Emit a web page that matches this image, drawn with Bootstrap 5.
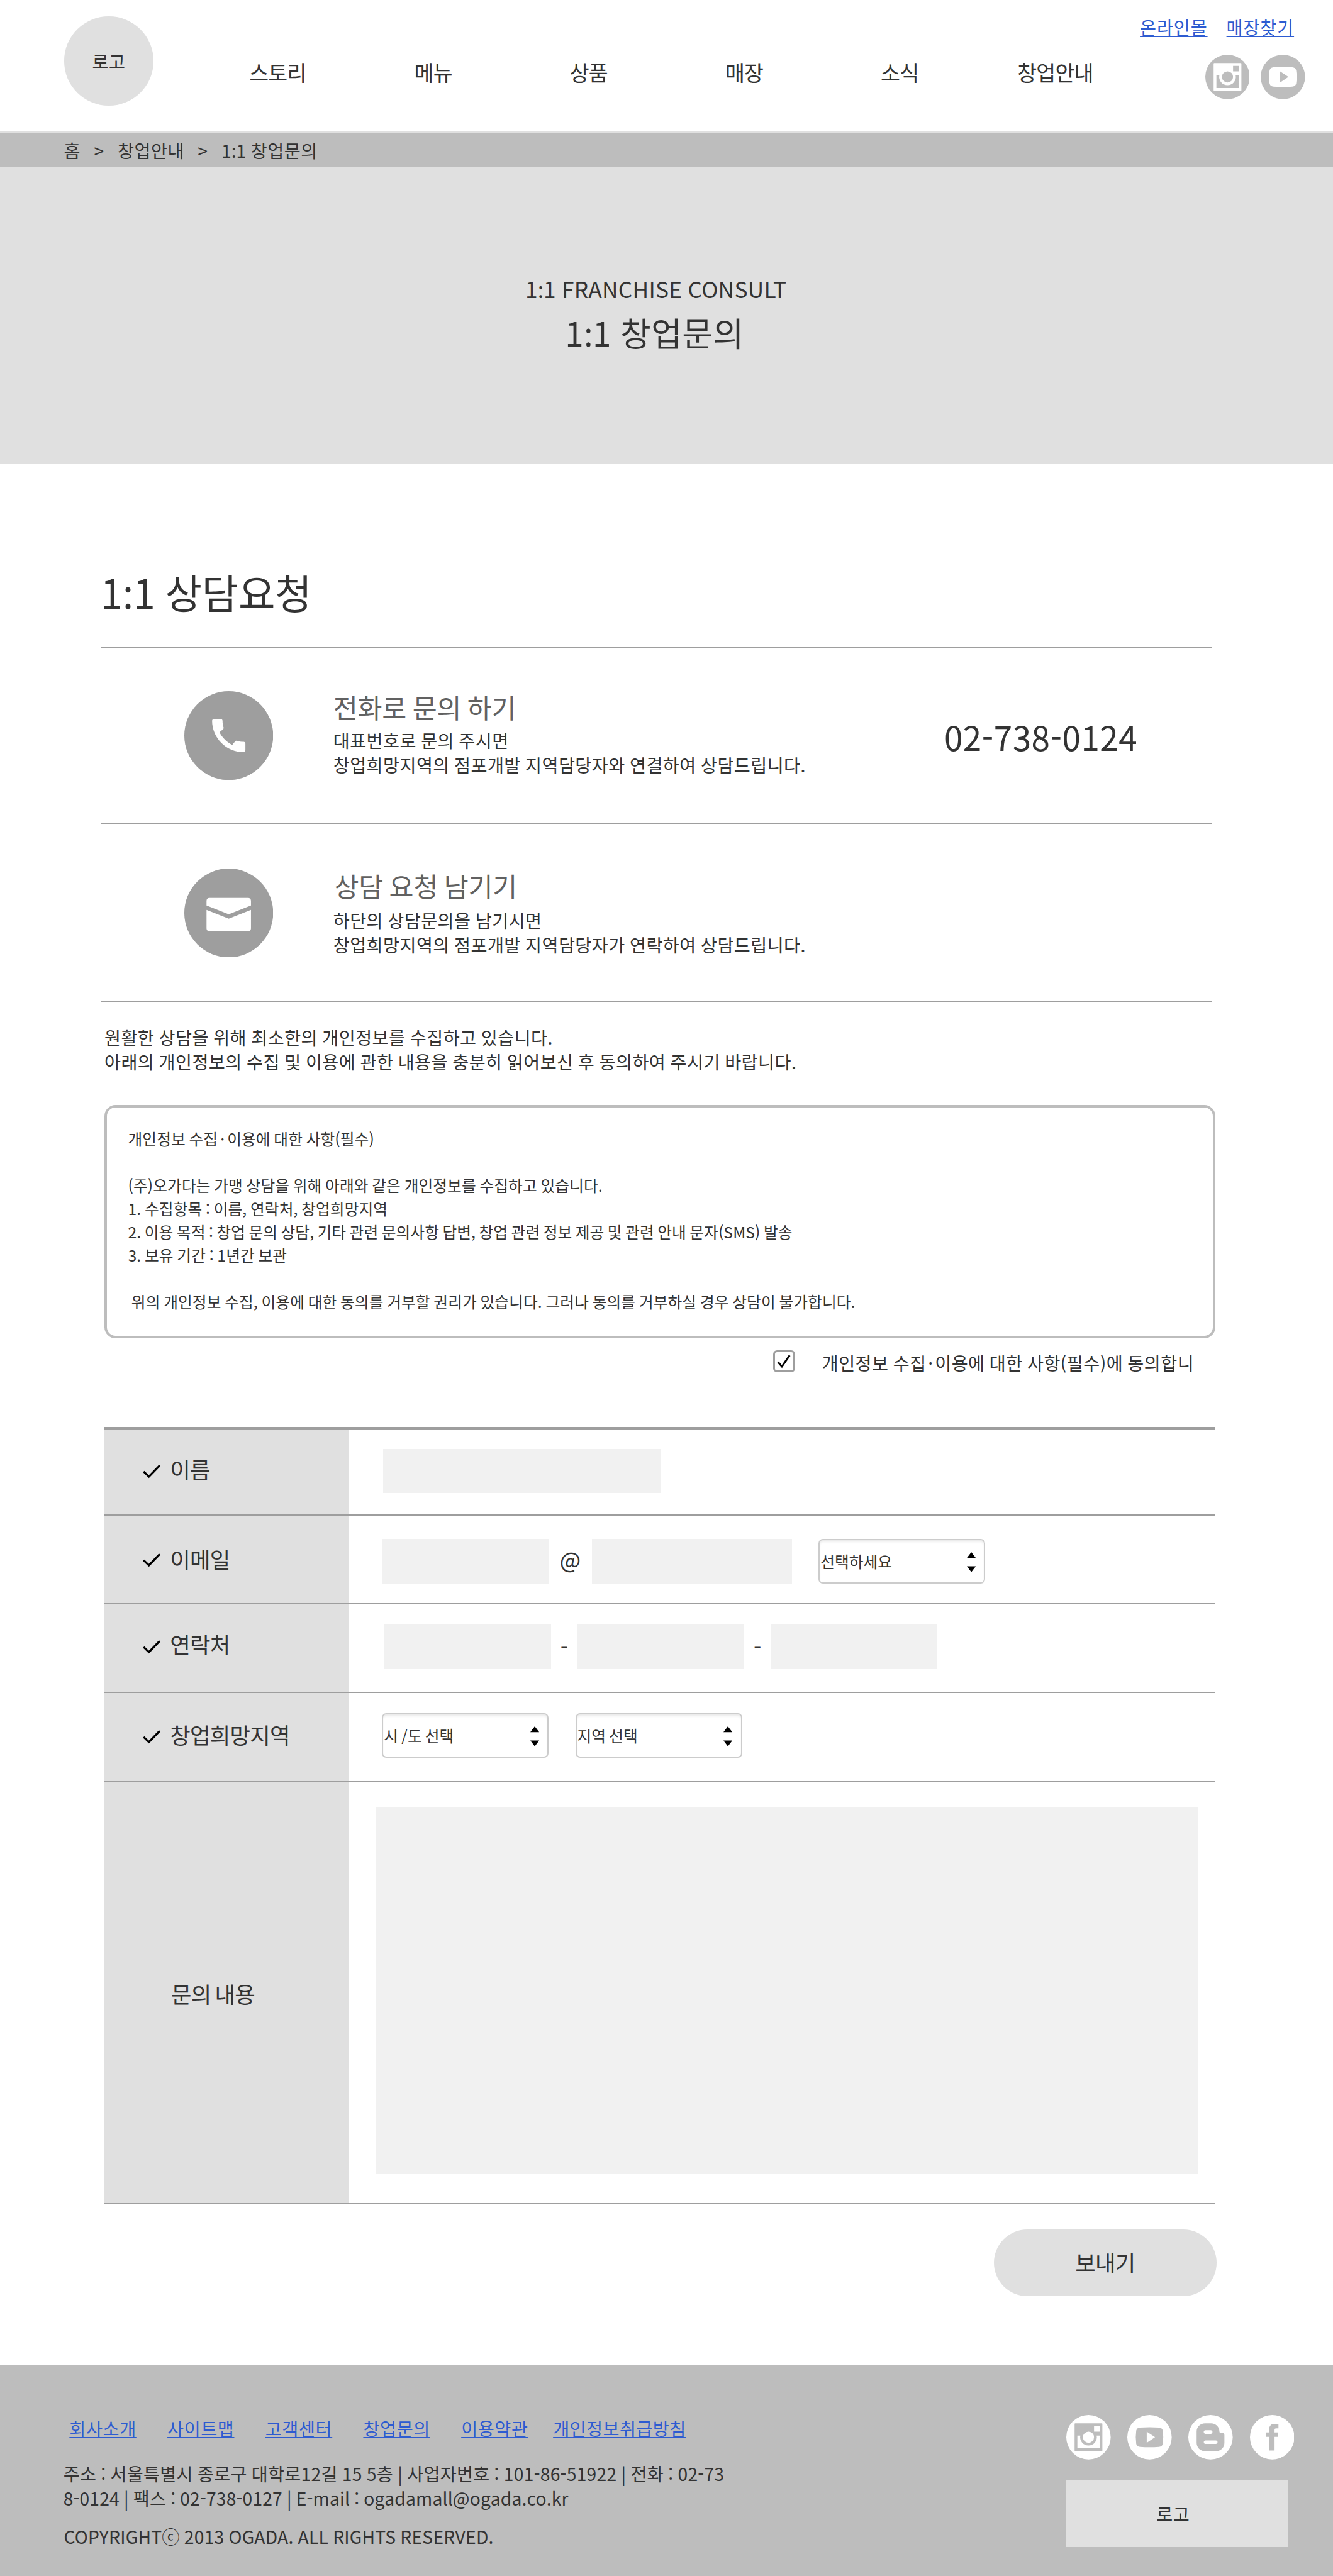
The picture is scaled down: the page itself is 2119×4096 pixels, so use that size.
<!DOCTYPE html>
<html lang="ko">
<head>
<meta charset="utf-8">
<meta name="viewport" content="width=device-width, initial-scale=1">
<title>1:1 창업문의</title>
<link href="https://cdn.jsdelivr.net/npm/bootstrap@5.3.0/dist/css/bootstrap.min.css" rel="stylesheet">
<style>
/* 1rem = 10 design pixels on the 2400-wide layout */
html{font-size:8.829167px}
body{font-family:"Noto Sans CJK KR",sans-serif;font-size:3.2rem;line-height:4.4rem;color:#333;background:#fff;letter-spacing:.05rem;word-spacing:-.12rem;overflow-x:hidden}
.bg-soft{background:#e0e0e0}
.bg-mid{background:#bdbdbd}
.cln{display:inline-block;width:.26em;text-align:center;font-family:"Noto Sans",sans-serif;line-height:1;letter-spacing:0}
.tlink{color:#2d5bd1;text-decoration:underline;text-decoration-thickness:2px;text-underline-offset:.25rem;text-decoration-skip-ink:none;white-space:nowrap}
.tlink:hover{color:#1d44a8}
.site-head{height:24rem;border-bottom:4px solid #e0e0e0}
.logo-dot{width:16rem;height:16rem;margin:3rem 0 0 11.6rem}
.main-menu{margin:10.2rem 0 0 8.4rem}
.main-menu .nav-link{width:28rem;padding:0;font-size:3.8rem;line-height:5.6rem;letter-spacing:-.08rem;color:#333;text-align:center}
.util{width:36rem}
.util-links{gap:3.4rem;padding:2.75rem 7rem 0 0;letter-spacing:.1rem}
.util-sns{gap:2rem;padding:2.65rem 5rem 0 0}
.sns{width:8rem;height:8rem;display:block}
.crumb-bar{height:6rem;padding:.2rem 0 0 11.5rem}
.crumb-bar .sep{width:6.7rem;text-align:center}
.hero{height:53.6rem;padding:19rem 3.8rem 0 0}
.hero-en{font-size:4rem;line-height:6rem;letter-spacing:.03rem}
.hero-ko{font-size:6rem;line-height:9rem;margin:.4rem .5rem 0 0;font-weight:400}
.sec-title{font-size:7.2rem;line-height:10.8rem;font-weight:400;letter-spacing:-.02rem;word-spacing:-.2rem;margin:17.6rem 0 4.4rem 18.1rem}
.contact-list{width:200rem;margin-left:18.2rem;border-top:2px solid #9e9e9e}
.contact-item{height:31.8rem;border-bottom:2px solid #9e9e9e;padding:7.8rem 13.4rem 0 15rem}
.contact-item + .contact-item{height:32rem;padding-top:8rem}
.ico-dot{width:16rem;height:16rem;flex:none}
.contact-body{margin-left:10.8rem}
.contact-body h2{font-size:4.8rem;line-height:6rem;font-weight:400;color:#616161;letter-spacing:-.02rem;word-spacing:-.25rem;margin:-.1rem 0 .8rem}
.contact-item + .contact-item h2{margin:.1rem 0 1rem .2rem}
.tel{font-size:6rem;line-height:8rem;letter-spacing:.06rem;margin-top:4.2rem}
.intro{margin:4.2rem 0 0 18.8rem}
.terms{width:200rem;height:42rem;margin:5.57rem 0 0 18.8rem;border:4px solid #bdbdbd;border-radius:2rem;padding:3.5rem 3.8rem;font-size:2.8rem;line-height:4.2rem;letter-spacing:.01rem;word-spacing:-.15rem}
.terms p{margin:0}
.terms .gap-top{margin-top:4.2rem}
.terms .indent{padding-left:.6rem}
.dotsep{padding:0 .45rem}
.agree{margin:2rem 0 0 139.2rem}
.agree .dotsep{padding:0 .3rem}
.tick-box{width:4rem;height:4rem;border:3px solid #9e9e9e;border-radius:.7rem}
.tick-box svg{width:2.6rem;height:2.6rem}
.agree-text{margin-left:4.8rem;padding-top:.3rem;margin-bottom:-.3rem}
.ask{width:200rem;margin:9.57rem 0 0 18.8rem;border-top:5px solid #9e9e9e}
.ask-row{height:16rem;border-bottom:2px solid #9e9e9e}
.ask-label{width:44rem;padding-left:6.9rem;font-size:4rem;line-height:6rem;letter-spacing:-.08rem}
.ask-label svg{width:3.2rem;height:2.6rem;margin-right:1.7rem}
.ask .form-control{height:8rem;width:30rem;background:#f1f1f1;border:0;border-radius:0;padding:0 1rem;font-size:3.2rem;flex:none}
.ask .joint{font-size:4rem;text-align:center;flex:none}
.pick{width:30rem;height:8rem;flex:none;border:2px solid #ccc;border-radius:.8rem;background:#fff;box-shadow:inset 0 .4rem .5rem -.2rem #e4e4e4;padding:0 1.5rem 0 .1rem;font-size:2.8rem;letter-spacing:0;word-spacing:-.2rem;color:#333}
.pick svg{width:1.6rem;height:3.6rem;margin-top:.4rem}
/* per-row offsets inside the form */
.row-name{height:15.43rem}
.row-name .ask-label{padding-bottom:1rem}
.row-name svg{margin-top:.6rem}
.row-name .ask-field{padding:0 0 .4rem 6.2rem}
.row-mail .ask-label svg{margin-top:.2rem}
.row-mail .ask-field{padding:.6rem 0 0 6rem}
.row-mail .joint{width:7.8rem;padding-bottom:.7rem}
.row-mail .pick{margin-left:4.8rem}
.row-tel .ask-label{padding-bottom:1.4rem}
.row-tel svg{margin-top:.9rem}
.row-tel .ask-field{padding:0 0 .6rem 6.4rem}
.row-tel .joint{width:4.8rem}
.row-area .ask-label{padding-bottom:.8rem}
.row-area .ask-label svg{margin-top:.6rem}
.row-area .ask-field{padding:0 0 .6rem 6rem}
.row-area .pick + .pick{margin-left:4.8rem}
.row-memo{height:76rem}
.row-memo .ask-field{padding:4.6rem 0 0 4.8rem}
.row-memo .ask-label{padding:.4rem 0 0 12rem;word-spacing:-.35rem}
.ask .row-memo .form-control{width:148rem;height:66rem;resize:none}
.send{width:40rem;height:12rem;margin:4.6rem 0 0 179rem;padding:0 0 .2rem;font-size:4rem;letter-spacing:-.08rem;color:#333;border-radius:6rem;border:0}
.site-foot{height:38rem;margin-top:12.4rem;padding:9rem 7rem 0 11.4rem}
.foot-links{padding:.15rem 0 0 1.1rem;gap:5.58rem;letter-spacing:.07rem}
.foot-links .last{margin-left:-1.1rem;letter-spacing:.05rem}
.foot-addr{margin-top:3.8rem;letter-spacing:.02rem}
.foot-addr .wide-line{letter-spacing:.03rem}
.foot-copy{margin:2.5rem 0 0 .1rem;letter-spacing:.025rem}
.foot-sns{width:41rem}
.foot-logo{width:40rem;height:12rem;margin-top:3.8rem;padding-right:1.6rem}
</style>
</head>
<body>
<svg class="d-none" xmlns="http://www.w3.org/2000/svg">
  <symbol id="insta" viewBox="0 0 80 80"><path fill-rule="evenodd" d="M16 15h48a1 1 0 0 1 1 1v48a1 1 0 0 1-1 1H16a1 1 0 0 1-1-1V16a1 1 0 0 1 1-1zM50 20v10h10V20zM20 37v23h40V37h-5.300a15 15 0 1 1-29.400 0zM40 30a10 10 0 1 0 0 20a10 10 0 1 0 0-20z"/></symbol>
  <symbol id="tube" viewBox="0 0 80 80"><path fill-rule="evenodd" d="M23 22.600Q40 21.400 57 22.600Q62.500 23 63.900 28Q65.700 40 63.900 52Q62.500 57 57 57.400Q40 58.600 23 57.400Q17.500 57 16.100 52Q14.300 40 16.100 28Q17.500 23 23 22.600zM35 30v20l15-10z"/></symbol>
  <symbol id="blog" viewBox="0 0 80 80"><path fill-rule="evenodd" d="M30 15H41C49.500 15 56 21.500 56 29.500Q56 32.500 59 32.500H61.500Q65 32.700 65 36V50C65 58.500 58.500 65 50 65H30C21.500 65 15 58.500 15 50V30C15 21.500 21.500 15 30 15zM31 27.500a3.200 3.200 0 0 0 0 6.400h9.300a3.200 3.200 0 0 0 0-6.400zM31 46a3.100 3.100 0 0 0 0 6.200h18.500a3.100 3.100 0 0 0 0-6.200z"/></symbol>
  <symbol id="face" viewBox="0 0 80 80"><path d="M34.600 64V39.500H29V31.500H34.600V26.500C34.600 19.500 38 15.800 44.500 15.800H51.300V24H47Q44.300 24 44.300 26.700V31.500H51L50.300 39.500H44.300V64z"/></symbol>
  <symbol id="tick" viewBox="0 0 32 26"><path d="M1.500 13.500L11 22.500L30.500 2.500" fill="none" stroke="#000" stroke-width="3.700"/></symbol>
  <symbol id="updown" viewBox="0 0 16 36"><path d="M8 0L16 10.500H0zM8 36L16 25.500H0z"/></symbol>
</svg>

<header class="site-head d-flex align-items-start">
  <a href="#" class="logo-dot bg-soft rounded-circle d-flex align-items-center justify-content-center text-reset text-decoration-none">로고</a>
  <ul class="main-menu nav flex-nowrap">
    <li class="nav-item"><a class="nav-link" href="#">스토리</a></li>
    <li class="nav-item"><a class="nav-link" href="#">메뉴</a></li>
    <li class="nav-item"><a class="nav-link" href="#">상품</a></li>
    <li class="nav-item"><a class="nav-link" href="#">매장</a></li>
    <li class="nav-item"><a class="nav-link" href="#">소식</a></li>
    <li class="nav-item"><a class="nav-link" href="#">창업안내</a></li>
  </ul>
  <div class="util">
    <div class="util-links d-flex justify-content-end"><a href="#" class="tlink">온라인몰</a><a href="#" class="tlink">매장찾기</a></div>
    <div class="util-sns d-flex justify-content-end">
      <svg class="sns" viewBox="0 0 80 80"><circle cx="40" cy="40" r="40" fill="#bdbdbd"/><use href="#insta" fill="#fff"/></svg>
      <svg class="sns" viewBox="0 0 80 80"><circle cx="40" cy="40" r="40" fill="#bdbdbd"/><use href="#tube" fill="#fff"/></svg>
    </div>
  </div>
</header>

<nav class="crumb-bar bg-mid d-flex align-items-center">
  <span>홈</span><span class="sep">&gt;</span><span>창업안내</span><span class="sep">&gt;</span><span>1<span class="cln">:</span>1 창업문의</span>
</nav>

<section class="hero bg-soft text-center">
  <div class="hero-en">1<span class="cln">:</span>1 FRANCHISE CONSULT</div>
  <h1 class="hero-ko">1<span class="cln">:</span>1 창업문의</h1>
</section>

<main>
  <h2 class="sec-title">1<span class="cln">:</span>1 상담요청</h2>
  <div class="contact-list">
    <div class="contact-item d-flex align-items-start">
      <svg class="ico-dot" viewBox="0 0 160 160"><circle cx="80" cy="80" r="80" fill="#9e9e9e"/><path transform="translate(40 40) scale(3.3333)" fill="#fff" d="M20.010 15.380c-1.230 0-2.420-.2-3.530-.56a.977.977 0 0 0-1.010.24l-1.570 1.970c-2.830-1.350-5.480-3.900-6.890-6.830l1.950-1.660c.27-.28.35-.67.24-1.020-.37-1.110-.56-2.300-.56-3.530 0-.54-.45-.99-.99-.99H4.190C3.650 3 3 3.240 3 3.990 3 13.280 10.730 21 20.010 21c.71 0 .99-.63.99-1.180v-3.450c0-.54-.45-.99-.99-.99z"/></svg>
      <div class="contact-body">
        <h2>전화로 문의 하기</h2>
        <div>대표번호로 문의 주시면<br>창업희망지역의 점포개발 지역담당자와 연결하여 상담드립니다.</div>
      </div>
      <div class="tel ms-auto">02-738-0124</div>
    </div>
    <div class="contact-item d-flex align-items-start">
      <svg class="ico-dot" viewBox="0 0 160 160"><circle cx="80" cy="80" r="80" fill="#9e9e9e"/><path fill="#fff" d="M45 53H115a5 5 0 0 1 5 5V66.500L80 82.500L40 66.500V58a5 5 0 0 1 5-5zM40 74.500L80 90.300L120 74.500V108a5 5 0 0 1-5 5H45a5 5 0 0 1-5-5z"/></svg>
      <div class="contact-body">
        <h2>상담 요청 남기기</h2>
        <div>하단의 상담문의을 남기시면<br>창업희망지역의 점포개발 지역담당자가 연락하여 상담드립니다.</div>
      </div>
    </div>
  </div>

  <div class="intro">원활한 상담을 위해 최소한의 개인정보를 수집하고 있습니다.<br>아래의 개인정보의 수집 및 이용에 관한 내용을 충분히 읽어보신 후 동의하여 주시기 바랍니다.</div>

  <div class="terms">
    <p>개인정보 수집<span class="dotsep">·</span>이용에 대한 사항(필수)</p>
    <p class="gap-top">(주)오가다는 가맹 상담을 위해 아래와 같은 개인정보를 수집하고 있습니다.</p>
    <p>1. 수집항목 : 이름, 연락처, 창업희망지역</p>
    <p style="word-spacing:-.18rem">2. 이용 목적 : 창업 문의 상담, 기타 관련 문의사항 답변, 창업 관련 정보 제공 및 관련 안내 문자(SMS) 발송</p>
    <p>3. 보유 기간 : 1년간 보관</p>
    <p class="gap-top indent">위의 개인정보 수집, 이용에 대한 동의를 거부할 권리가 있습니다. 그러나 동의를 거부하실 경우 상담이 불가합니다.</p>
  </div>

  <div class="agree d-flex align-items-center">
    <span class="tick-box d-flex align-items-center justify-content-center"><svg viewBox="0 0 26 26"><path d="M2 14.500L9 22.500L23 2.500" fill="none" stroke="#000" stroke-width="3.400"/></svg></span>
    <span class="agree-text">개인정보 수집<span class="dotsep">·</span>이용에 대한 사항(필수)에 동의합니</span>
  </div>

  <form class="ask">
    <div class="ask-row row-name d-flex">
      <div class="ask-label bg-soft d-flex align-items-center"><svg><use href="#tick"/></svg>이름</div>
      <div class="ask-field d-flex align-items-center"><input class="form-control" style="width:50rem" aria-label="이름"></div>
    </div>
    <div class="ask-row row-mail d-flex">
      <div class="ask-label bg-soft d-flex align-items-center"><svg><use href="#tick"/></svg>이메일</div>
      <div class="ask-field d-flex align-items-center">
        <input class="form-control" aria-label="이메일 아이디">
        <span class="joint">@</span>
        <input class="form-control" style="width:36rem" aria-label="이메일 도메인">
        <button type="button" class="pick d-flex align-items-center justify-content-between">선택하세요<svg><use href="#updown"/></svg></button>
      </div>
    </div>
    <div class="ask-row row-tel d-flex">
      <div class="ask-label bg-soft d-flex align-items-center"><svg><use href="#tick"/></svg>연락처</div>
      <div class="ask-field d-flex align-items-center">
        <input class="form-control" aria-label="연락처 1">
        <span class="joint">-</span>
        <input class="form-control" aria-label="연락처 2">
        <span class="joint">-</span>
        <input class="form-control" aria-label="연락처 3">
      </div>
    </div>
    <div class="ask-row row-area d-flex">
      <div class="ask-label bg-soft d-flex align-items-center"><svg><use href="#tick"/></svg>창업희망지역</div>
      <div class="ask-field d-flex align-items-center">
        <button type="button" class="pick d-flex align-items-center justify-content-between">시 /도 선택<svg><use href="#updown"/></svg></button>
        <button type="button" class="pick d-flex align-items-center justify-content-between">지역 선택<svg><use href="#updown"/></svg></button>
      </div>
    </div>
    <div class="ask-row row-memo d-flex">
      <div class="ask-label bg-soft d-flex align-items-center">문의 내용</div>
      <div class="ask-field"><textarea class="form-control" aria-label="문의 내용"></textarea></div>
    </div>
  </form>
  <button type="button" class="send btn bg-soft d-flex align-items-center justify-content-center">보내기</button>
</main>

<footer class="site-foot bg-mid d-flex justify-content-between align-items-start">
  <div>
    <div class="foot-links d-flex">
      <a href="#" class="tlink">회사소개</a><a href="#" class="tlink">사이트맵</a><a href="#" class="tlink">고객센터</a><a href="#" class="tlink">창업문의</a><a href="#" class="tlink">이용약관</a><a href="#" class="tlink last">개인정보취급방침</a>
    </div>
    <div class="foot-addr"><span class="wide-line">주소 : 서울특별시 종로구 대학로12길 15 5층 | 사업자번호 : 101-86-51922 | 전화 : 02-73</span><br>8-0124 | 팩스 : 02-738-0127 | E-mail : ogadamall@ogada.co.kr</div>
    <div class="foot-copy">COPYRIGHTⓒ 2013 OGADA. ALL RIGHTS RESERVED.</div>
  </div>
  <div class="foot-sns">
    <div class="d-flex justify-content-between">
      <svg class="sns" viewBox="0 0 80 80"><circle cx="40" cy="40" r="40" fill="#fff"/><use href="#insta" fill="#bdbdbd"/></svg>
      <svg class="sns" viewBox="0 0 80 80"><circle cx="40" cy="40" r="40" fill="#fff"/><use href="#tube" fill="#bdbdbd"/></svg>
      <svg class="sns" viewBox="0 0 80 80"><circle cx="40" cy="40" r="40" fill="#fff"/><use href="#blog" fill="#bdbdbd"/></svg>
      <svg class="sns" viewBox="0 0 80 80"><circle cx="40" cy="40" r="40" fill="#fff"/><use href="#face" fill="#bdbdbd"/></svg>
    </div>
    <div class="foot-logo bg-soft d-flex align-items-center justify-content-center">로고</div>
  </div>
</footer>
<script src="https://cdn.jsdelivr.net/npm/bootstrap@5.3.0/dist/js/bootstrap.bundle.min.js"></script>
</body>
</html>
